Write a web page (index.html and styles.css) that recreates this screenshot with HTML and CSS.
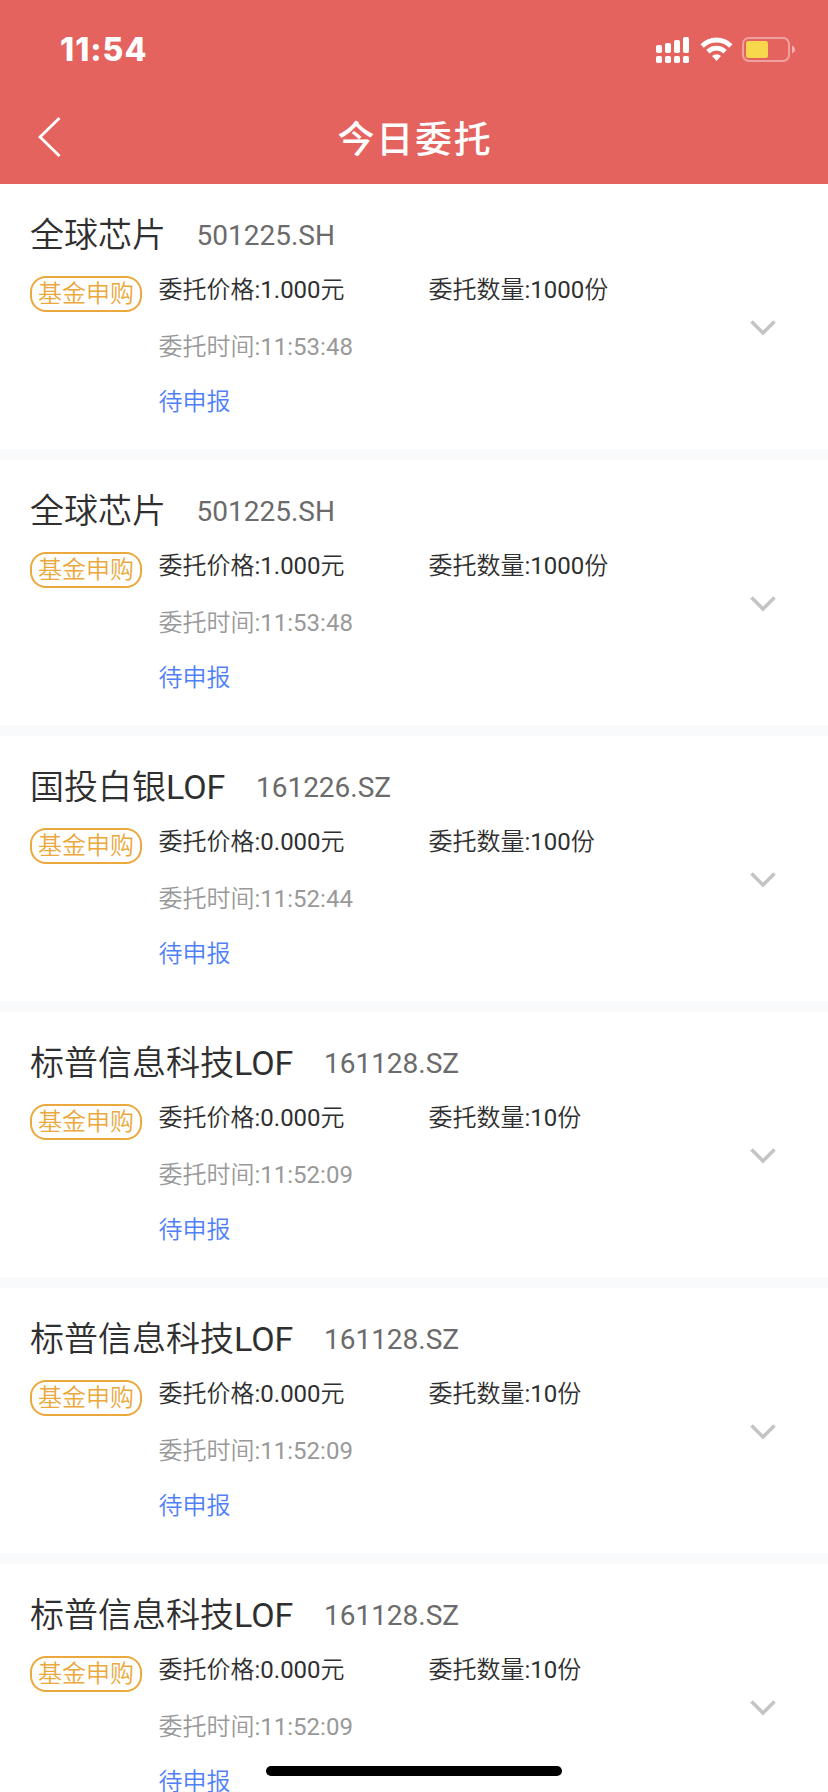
FILE: index.html
```html
<!DOCTYPE html>
<html lang="zh-CN">
<head>
<meta charset="utf-8">
<title>今日委托</title>
<link rel="stylesheet" href="styles.css">
</head>
<body>
<div class="screen">
  <header class="header">
    <div class="status-bar">
      <span class="clock">11:54</span>
      <svg class="status-icons" width="142" height="30" viewBox="0 0 142 30" fill="#fff">
        <rect x="1" y="10" width="6" height="8" rx="1.8"/><rect x="10" y="8" width="6" height="10" rx="1.8"/><rect x="19" y="5" width="6" height="13" rx="1.8"/><rect x="28" y="2" width="6" height="16" rx="1.8"/>
        <rect x="1" y="21" width="6" height="7" rx="1.8"/><rect x="10" y="21" width="6" height="7" rx="1.8"/><rect x="19" y="21" width="6" height="7" rx="1.8"/><rect x="28" y="21" width="6" height="7" rx="1.8"/>
        <path d="M45.5 9.3a22.5 22.5 0 0 1 32 0l-3.3 3.4a18 18 0 0 0-25.4 0z"/>
        <path d="M51.2 15a14.600 14.600 0 0 1 20.600 0l-3.400 3.400a9.800 9.800 0 0 0-13.800 0z"/>
        <path d="M57 21.100a6.600 6.600 0 0 1 9 0l-4.500 5z"/>
        <rect x="88" y="3" width="46" height="23" rx="6" fill="none" stroke="#fff" stroke-opacity=".4" stroke-width="2"/>
        <rect x="91" y="6" width="22" height="17" rx="2.500" fill="#f7d74c"/>
        <path d="M137 10.500c4 1.500 4 6.500 0 8z" fill-opacity=".5"/>
      </svg>
    </div>
    <div class="nav-bar">
      <svg class="back" width="26" height="40" viewBox="0 0 26 40" fill="none" stroke="#fff" stroke-width="2.800"><path d="M22.500 1L3 20L22.500 39"/></svg>
      <h1 class="nav-title">今日委托</h1>
    </div>
  </header>
  <main class="orders">
    <article class="order">
      <div class="heading"><span class="name">全球芯片</span><span class="code">501225.SH</span></div>
      <div class="body">
        <span class="tag">基金申购</span>
        <div class="details">
          <div class="row"><span class="price">委托价格<span class="num">:1.000</span>元</span><span>委托数量<span class="num">:1000</span>份</span></div>
          <div class="time">委托时间<span class="num">:11:53:48</span></div>
          <div class="state">待申报</div>
        </div>
        <svg class="chevron" width="26" height="16" viewBox="0 0 26 16"><path d="M1.500 1.500L13 13L24.500 1.500"/></svg>
      </div>
    </article>
    <article class="order">
      <div class="heading"><span class="name">全球芯片</span><span class="code">501225.SH</span></div>
      <div class="body">
        <span class="tag">基金申购</span>
        <div class="details">
          <div class="row"><span class="price">委托价格<span class="num">:1.000</span>元</span><span>委托数量<span class="num">:1000</span>份</span></div>
          <div class="time">委托时间<span class="num">:11:53:48</span></div>
          <div class="state">待申报</div>
        </div>
        <svg class="chevron" width="26" height="16" viewBox="0 0 26 16"><path d="M1.500 1.500L13 13L24.500 1.500"/></svg>
      </div>
    </article>
    <article class="order">
      <div class="heading"><span class="name">国投白银<span class="num">LOF</span></span><span class="code">161226.SZ</span></div>
      <div class="body">
        <span class="tag">基金申购</span>
        <div class="details">
          <div class="row"><span class="price">委托价格<span class="num">:0.000</span>元</span><span>委托数量<span class="num">:100</span>份</span></div>
          <div class="time">委托时间<span class="num">:11:52:44</span></div>
          <div class="state">待申报</div>
        </div>
        <svg class="chevron" width="26" height="16" viewBox="0 0 26 16"><path d="M1.500 1.500L13 13L24.500 1.500"/></svg>
      </div>
    </article>
    <article class="order">
      <div class="heading"><span class="name">标普信息科技<span class="num">LOF</span></span><span class="code">161128.SZ</span></div>
      <div class="body">
        <span class="tag">基金申购</span>
        <div class="details">
          <div class="row"><span class="price">委托价格<span class="num">:0.000</span>元</span><span>委托数量<span class="num">:10</span>份</span></div>
          <div class="time">委托时间<span class="num">:11:52:09</span></div>
          <div class="state">待申报</div>
        </div>
        <svg class="chevron" width="26" height="16" viewBox="0 0 26 16"><path d="M1.500 1.500L13 13L24.500 1.500"/></svg>
      </div>
    </article>
    <article class="order">
      <div class="heading"><span class="name">标普信息科技<span class="num">LOF</span></span><span class="code">161128.SZ</span></div>
      <div class="body">
        <span class="tag">基金申购</span>
        <div class="details">
          <div class="row"><span class="price">委托价格<span class="num">:0.000</span>元</span><span>委托数量<span class="num">:10</span>份</span></div>
          <div class="time">委托时间<span class="num">:11:52:09</span></div>
          <div class="state">待申报</div>
        </div>
        <svg class="chevron" width="26" height="16" viewBox="0 0 26 16"><path d="M1.500 1.500L13 13L24.500 1.500"/></svg>
      </div>
    </article>
    <article class="order">
      <div class="heading"><span class="name">标普信息科技<span class="num">LOF</span></span><span class="code">161128.SZ</span></div>
      <div class="body">
        <span class="tag">基金申购</span>
        <div class="details">
          <div class="row"><span class="price">委托价格<span class="num">:0.000</span>元</span><span>委托数量<span class="num">:10</span>份</span></div>
          <div class="time">委托时间<span class="num">:11:52:09</span></div>
          <div class="state">待申报</div>
        </div>
        <svg class="chevron" width="26" height="16" viewBox="0 0 26 16"><path d="M1.500 1.500L13 13L24.500 1.500"/></svg>
      </div>
    </article>
  </main>
  <div class="home-indicator"></div>
</div>
</body>
</html>
```
FILE: styles.css
```css
* { box-sizing: border-box; }
body {
  margin: 0;
  font-family: Roboto, "Noto Sans CJK SC", sans-serif;
  font-weight: 350;
  background: #fff;
}
.screen {
  position: relative;
  width: 828px;
  height: 1792px;
  overflow: hidden;
}
.header {
  height: 184px;
  background: #e5635f;
  color: #fff;
}
.status-bar {
  display: flex;
  justify-content: space-between;
  align-items: flex-start;
  height: 92px;
  padding: 35px 31px 0 60px;
}
.clock {
  font: 800 32px/30px Inter, sans-serif;
  letter-spacing: 1px;
}
.nav-bar {
  display: grid;
  grid-template-columns: 1fr auto 1fr;
  align-items: center;
  height: 92px;
  padding: 0 35px 0 37px;
}
.back { margin-top: -2px; }
.nav-title {
  margin: 0;
  padding-top: 6px;
  font-size: 37px;
  line-height: 86px;
  font-weight: 500;
  letter-spacing: 1.8px;
}
.order {
  height: 276px;
  padding: 28px 52px 0 30px;
  border-bottom: 11px solid #f9fafc;
}
.heading {
  display: flex;
  align-items: center;
  gap: 30.5px;
  height: 46px;
}
.name {
  font-size: 34px;
  line-height: 46px;
  color: #2f2f2f;
}
.num { font-weight: 400; }
.code {
  padding-top: 2px;
  font-size: 28px;
  line-height: 44px;
  font-weight: 400;
  color: #6b6b6b;
}
.body {
  display: flex;
  align-items: flex-start;
  padding-top: 18px;
}
.tag {
  width: 112px;
  height: 36px;
  border: 2px solid #eba83c;
  border-radius: 16px;
  color: #eba83c;
  font-size: 24px;
  line-height: 32px;
  text-align: center;
  white-space: nowrap;
}
.details {
  flex: 1;
  margin-left: 16.5px;
  font-size: 24px;
  line-height: 28px;
  color: #2f2f2f;
}
.row { display: flex; }
.price { width: 270px; }
.time {
  margin-top: 29px;
  color: #999;
}
.state {
  margin-top: 27px;
  color: #4f80f7;
}
.chevron {
  margin-top: 44px;
  fill: none;
  stroke: #c4c4c4;
  stroke-width: 3.5;
}
.home-indicator {
  position: absolute;
  left: 266px;
  bottom: 16px;
  width: 296px;
  height: 10px;
  border-radius: 5px;
  background: #000;
}
```
